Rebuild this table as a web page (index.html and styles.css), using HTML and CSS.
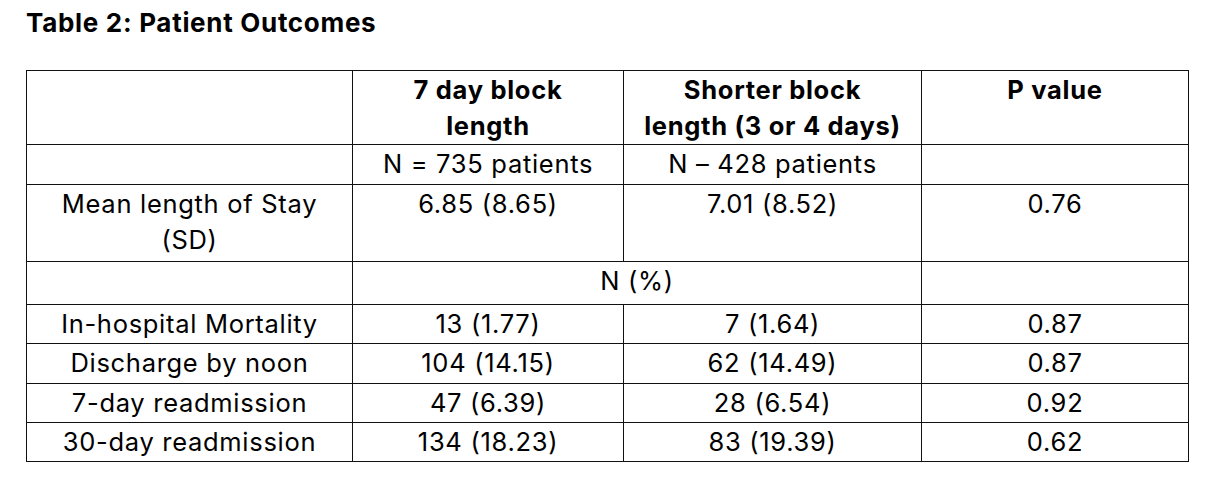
FILE: index.html
```html
<!DOCTYPE html>
<html lang="en">
<head>
<meta charset="utf-8">
<title>Table 2: Patient Outcomes</title>
<link rel="stylesheet" href="styles.css">
</head>
<body>
<main class="page">
  <h1 class="caption">Table 2: Patient Outcomes</h1>
  <table class="outcomes">
    <colgroup>
      <col class="c-label">
      <col class="c-long">
      <col class="c-short">
      <col class="c-p">
    </colgroup>
    <tbody>
      <tr class="r-head">
        <td></td>
        <td class="bold">7 day block<br>length</td>
        <td class="bold">Shorter block<br>length (3 or 4 days)</td>
        <td class="bold">P value</td>
      </tr>
      <tr class="r-n">
        <td></td>
        <td>N = 735 patients</td>
        <td>N – 428 patients</td>
        <td></td>
      </tr>
      <tr class="r-mean">
        <td>Mean length of Stay<br>(SD)</td>
        <td>6.85 (8.65)</td>
        <td>7.01 (8.52)</td>
        <td>0.76</td>
      </tr>
      <tr class="r-pct">
        <td></td>
        <td colspan="2">N (%)</td>
        <td></td>
      </tr>
      <tr class="r-a">
        <td>In-hospital Mortality</td>
        <td>13 (1.77)</td>
        <td>7 (1.64)</td>
        <td>0.87</td>
      </tr>
      <tr class="r-b">
        <td>Discharge by noon</td>
        <td>104 (14.15)</td>
        <td>62 (14.49)</td>
        <td>0.87</td>
      </tr>
      <tr class="r-a">
        <td>7-day readmission</td>
        <td>47 (6.39)</td>
        <td>28 (6.54)</td>
        <td>0.92</td>
      </tr>
      <tr class="r-a">
        <td>30-day readmission</td>
        <td>134 (18.23)</td>
        <td>83 (19.39)</td>
        <td>0.62</td>
      </tr>
    </tbody>
  </table>
</main>
</body>
</html>
```

FILE: styles.css
```css
html, body {
  margin: 0;
  padding: 0;
  background: #ffffff;
}

.page {
  padding: 4px 0 0 26px;
  font-family: "Inter", "Liberation Sans", sans-serif;
  color: #000000;
}

.caption {
  margin: 0 0 28px 0;
  font-size: 26px;
  line-height: 38px;
  font-weight: 700;
  letter-spacing: 0.7px;
}

.outcomes {
  border-collapse: collapse;
  table-layout: fixed;
  width: 1163px;
  font-size: 25.5px;
  letter-spacing: 0.7px;
}

.c-label { width: 326px; }
.c-long { width: 271px; }
.c-short { width: 298px; }
.c-p { width: 267px; }

.outcomes td {
  border: 1px solid #111111;
  padding: 1px 4px 0 4px;
  text-align: center;
  vertical-align: top;
  line-height: 36px;
  white-space: nowrap;
}

.outcomes .bold {
  font-weight: 700;
}

.r-head { height: 74px; }
.r-n { height: 40px; }
.r-mean { height: 77px; }
.r-pct { height: 43px; }
.r-a { height: 39px; }
.r-b { height: 40px; }
```
